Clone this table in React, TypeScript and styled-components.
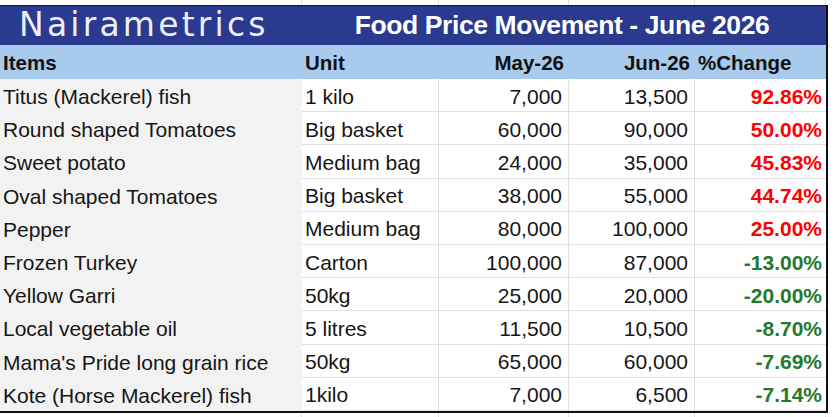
import React from "react";
import styled, { createGlobalStyle } from "styled-components";

interface PriceRow {
  item: string;
  unit: string;
  may: string;
  jun: string;
  change: string;
}

const rows: PriceRow[] = [
  { item: "Titus (Mackerel) fish", unit: "1 kilo", may: "7,000", jun: "13,500", change: "92.86%" },
  { item: "Round shaped Tomatoes", unit: "Big basket", may: "60,000", jun: "90,000", change: "50.00%" },
  { item: "Sweet potato", unit: "Medium bag", may: "24,000", jun: "35,000", change: "45.83%" },
  { item: "Oval shaped Tomatoes", unit: "Big basket", may: "38,000", jun: "55,000", change: "44.74%" },
  { item: "Pepper", unit: "Medium bag", may: "80,000", jun: "100,000", change: "25.00%" },
  { item: "Frozen Turkey", unit: "Carton", may: "100,000", jun: "87,000", change: "-13.00%" },
  { item: "Yellow Garri", unit: "50kg", may: "25,000", jun: "20,000", change: "-20.00%" },
  { item: "Local vegetable oil", unit: "5 litres", may: "11,500", jun: "10,500", change: "-8.70%" },
  { item: "Mama's Pride long grain rice", unit: "50kg", may: "65,000", jun: "60,000", change: "-7.69%" },
  { item: "Kote (Horse Mackerel) fish", unit: "1kilo", may: "7,000", jun: "6,500", change: "-7.14%" },
];

const COLS = "302px 137px 130px 126px 131px";

const GlobalStyle = createGlobalStyle`
  body {
    margin: 0;
    background: #ffffff;
    font-family: "Liberation Sans", Arial, sans-serif;
  }
`;

function App(): JSX.Element {
  return (
    <Page>
      <GlobalStyle />
      <GridStrip $height={5}>
        <Blank />
        <Blank />
        <Blank />
        <Blank />
        <Blank />
      </GridStrip>
      <Sheet>
        <Banner>
          <Logo>Nairametrics</Logo>
          <Title>Food Price Movement - June 2026</Title>
        </Banner>
        <HeaderRow>
          <HeadCell>Items</HeadCell>
          <HeadCell>Unit</HeadCell>
          <HeadCell $align="right">May-26</HeadCell>
          <HeadCell $align="right">Jun-26</HeadCell>
          <HeadCell>%Change</HeadCell>
        </HeaderRow>
        {rows.map((row) => (
          <Row key={row.item}>
            <ItemCell>{row.item}</ItemCell>
            <Cell>{row.unit}</Cell>
            <Cell $align="right">{row.may}</Cell>
            <Cell $align="right">{row.jun}</Cell>
            <ChangeCell $up={!row.change.startsWith("-")}>{row.change}</ChangeCell>
          </Row>
        ))}
      </Sheet>
      <GridStrip $height={4}>
        <Blank />
        <Blank />
        <Blank />
        <Blank />
        <Blank />
      </GridStrip>
    </Page>
  );
}

const Page = styled.div`
  width: 834px;
  height: 417px;
  overflow: hidden;
  background: #ffffff;
`;

const GridStrip = styled.div<{ $height: number }>`
  display: grid;
  grid-template-columns: ${COLS};
  height: ${(p) => p.$height}px;
`;

const Blank = styled.div`
  border-right: 1px solid #e1e1e1;
`;

const Sheet = styled.div`
  width: 826px;
  border-right: 2px solid #111111;
  border-bottom: 2px solid #111111;
`;

const Banner = styled.div`
  display: grid;
  grid-template-columns: 302px 1fr;
  align-items: center;
  height: 39px;
  border-top: 1px solid #1a1a1a;
  background: #293a8f;
`;

const Logo = styled.div`
  padding-left: 19px;
  font-family: "DejaVu Sans", sans-serif;
  font-size: 33px;
  letter-spacing: 3.2px;
  color: #eeeefb;
  line-height: 1;
  margin-top: -2px;
`;

const Title = styled.div`
  text-align: center;
  font-size: 26.5px;
  font-weight: 700;
  letter-spacing: -0.4px;
  color: #ffffff;
  line-height: 1;
  padding-right: 4px;
`;

const HeaderRow = styled.div`
  display: grid;
  grid-template-columns: ${COLS};
  height: 34px;
  background: #a8caed;
`;

const HeadCell = styled.div<{ $align?: string }>`
  display: flex;
  align-items: center;
  justify-content: ${(p) => (p.$align === "right" ? "flex-end" : "flex-start")};
  padding: 1px 5px 0 3px;
  font-size: 20.5px;
  font-weight: 700;
  color: #111111;
`;

const Row = styled.div`
  display: grid;
  grid-template-columns: ${COLS};
  height: 33.2px;
`;

const Cell = styled.div<{ $align?: string }>`
  display: flex;
  align-items: center;
  justify-content: ${(p) => (p.$align === "right" ? "flex-end" : "flex-start")};
  box-sizing: border-box;
  padding: 3px 6px 0 3px;
  font-size: 21px;
  color: #161616;
  white-space: nowrap;
  border-right: 1px solid #e1e1e1;
  border-bottom: 1px solid #e1e1e1;
`;

const ItemCell = styled(Cell)`
  background: #f2f2f2;
  border-right: none;
  border-bottom: none;
`;

const ChangeCell = styled(Cell)<{ $up: boolean }>`
  justify-content: flex-end;
  padding-right: 4px;
  border-right: none;
  font-weight: 700;
  color: ${(p) => (p.$up ? "#ff0000" : "#237a2d")};
`;

export default App;
